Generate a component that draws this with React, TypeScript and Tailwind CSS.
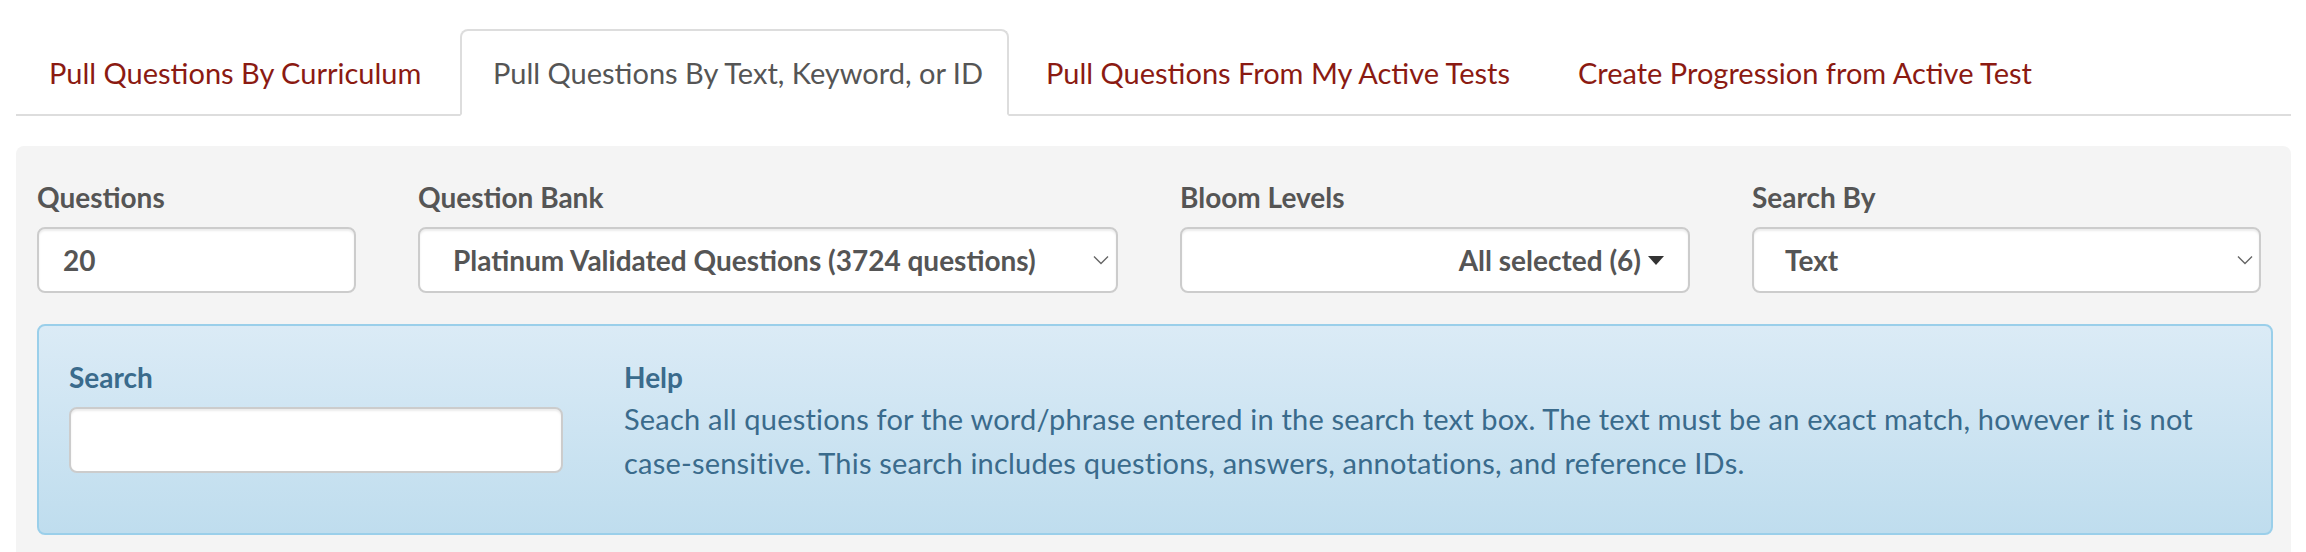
import React from 'react'

const tabs = [
  { label: 'Pull Questions By Curriculum', width: 'w-[440px]', active: false },
  { label: 'Pull Questions By Text, Keyword, or ID', width: 'w-[549px]', active: true },
  { label: 'Pull Questions From My Active Tests', width: 'w-[528px]', active: false },
  { label: 'Create Progression from Active Test', width: 'w-[530px]', active: false },
]

function Chevron() {
  return (
    <svg width="16" height="10" viewBox="0 0 16 10" fill="none" className="shrink-0">
      <polyline points="1,1.5 8,8.5 15,1.5" stroke="#666666" strokeWidth="1.4" />
    </svg>
  )
}

function Caret() {
  return (
    <svg width="16" height="9" viewBox="0 0 16 9" className="shrink-0">
      <polygon points="0,0 16,0 8,9" fill="#333333" />
    </svg>
  )
}

const fieldBox =
  'h-[66px] rounded-[8px] border-2 border-[#cccccc] bg-white shadow-[inset_0_2px_2px_rgba(0,0,0,0.075)] flex items-center text-[28px] font-bold text-[#555555]'

export default function App() {
  return (
    <div className="h-[552px] w-full overflow-hidden bg-white pl-[16px] pr-[15px] font-['Lato','Liberation_Sans',sans-serif]">
      {/* tabs */}
      <div className="mt-[29px] flex items-end border-b-2 border-[#dddddd]">
        {tabs.map(t => (
          <div
            key={t.label}
            className={`${t.width} -mb-[2px] mr-[4px] flex h-[87px] items-center whitespace-nowrap rounded-t-[8px] border-2 pl-[31px] text-[29px] ${
              t.active ? 'border-[#dddddd] border-b-white bg-white text-[#555555]' : 'border-transparent text-[#8b1a12]'
            }`}
          >
            {t.label}
          </div>
        ))}
      </div>

      {/* panel */}
      <div className="mt-[30px] rounded-[8px] bg-[#f4f4f4] pb-[30px] pl-[21px] pt-[31px]">
        <div className="flex gap-[62px]">
          <div className="w-[319px]">
            <div className="mb-[10px] text-[28px] font-bold leading-[40px] text-[#555555]">Questions</div>
            <div className={`${fieldBox} pl-[24px]`}>20</div>
          </div>
          <div className="w-[700px]">
            <div className="mb-[10px] text-[28px] font-bold leading-[40px] text-[#555555]">Question Bank</div>
            <div className={`${fieldBox} justify-between pl-[33px] pr-[7px]`}>
              <span className="whitespace-nowrap">Platinum Validated Questions (3724 questions)</span>
              <Chevron />
            </div>
          </div>
          <div className="w-[510px]">
            <div className="mb-[10px] text-[28px] font-bold leading-[40px] text-[#555555]">Bloom Levels</div>
            <div className={`${fieldBox} justify-end gap-[7px] pr-[24px]`}>
              <span className="whitespace-nowrap">All selected (6)</span>
              <Caret />
            </div>
          </div>
          <div className="w-[509px]">
            <div className="mb-[10px] text-[28px] font-bold leading-[40px] text-[#555555]">Search By</div>
            <div className={`${fieldBox} justify-between pl-[31px] pr-[6px]`}>
              <span>Text</span>
              <Chevron />
            </div>
          </div>
        </div>

        {/* info box */}
        <div className="mt-[31px] flex w-[2236px] items-start gap-[61px] rounded-[8px] border-2 border-[#9acfea] bg-linear-to-b from-[#dbebf6] to-[#bfddee] pb-[48px] pl-[30px] pt-[31px] text-[#3a6b8c]">
          <div className="w-[494px]">
            <div className="mb-[10px] text-[28px] font-bold leading-[40px]">Search</div>
            <div className="h-[66px] rounded-[8px] border-2 border-[#cccccc] bg-white shadow-[inset_0_2px_2px_rgba(0,0,0,0.075)]" />
          </div>
          <div className="flex-1">
            <div className="text-[28px] font-bold leading-[40px]">Help</div>
            <p className="text-[29px] leading-[44px] tracking-[0.2px]">
              <span className="block whitespace-nowrap">
                Seach all questions for the word/phrase entered in the search text box. The text must be an exact match, however it is not
              </span>
              <span className="block whitespace-nowrap">
                case-sensitive. This search includes questions, answers, annotations, and reference IDs.
              </span>
            </p>
          </div>
        </div>
      </div>
    </div>
  )
}
